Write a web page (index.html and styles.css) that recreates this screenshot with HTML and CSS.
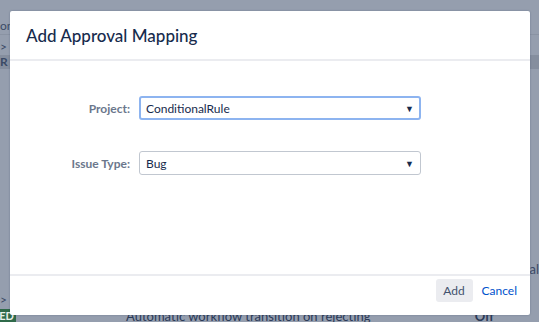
FILE: index.html
```html
<!DOCTYPE html>
<html lang="en">
<head>
<meta charset="UTF-8">
<meta name="viewport" content="width=device-width, initial-scale=1.0">
<title>Add Approval Mapping</title>
<link rel="stylesheet" href="styles.css">
</head>
<body>
  <!-- page behind the dialog, dimmed -->
  <div class="page">
    <div class="page-line top-line"><span class="frag">on</span></div>
    <div class="page-line"><span class="frag">&gt; l</span></div>
    <div class="page-line band"><span class="frag dark">R !</span></div>
    <div class="page-gap"></div>
    <div class="page-line side-text"><span class="frag">al</span></div>
    <div class="page-line arrow-line"><span class="frag">&gt;</span></div>
    <div class="page-line last-row">
      <span class="badge">ED</span>
      <span class="row-text">Automatic workflow transition on rejecting</span>
      <span class="row-state">Off</span>
    </div>
  </div>

  <div class="dialog">
    <div class="dialog-header">
      <h2>Add Approval Mapping</h2>
    </div>
    <div class="dialog-body">
      <div class="field">
        <label>Project:</label>
        <div class="select focused">
          <span>ConditionalRule</span>
          <span class="caret">&#9660;</span>
        </div>
      </div>
      <div class="field">
        <label>Issue Type:</label>
        <div class="select">
          <span>Bug</span>
          <span class="caret">&#9660;</span>
        </div>
      </div>
    </div>
    <div class="dialog-footer">
      <button class="btn">Add</button>
      <a class="cancel" href="#">Cancel</a>
    </div>
  </div>
</body>
</html>
```

FILE: styles.css
```css
body {
  margin: 0;
  font-family: Lato, "Open Sans", sans-serif;
  background-color: #959eae;
  height: 322px;
  overflow: hidden;
}

/* dimmed page behind the dialog */
.page {
  display: flex;
  flex-direction: column;
  color: #3b4a66;
  font-size: 12px;
}

.page-line {
  height: 14px;
  line-height: 14px;
}

.top-line {
  margin-top: 19px;
  border-bottom: 1px solid #8a93a3;
  height: 15px;
}

.page-line:nth-child(2) {
  margin-top: 5px;
}

.band {
  background-color: #858e9e;
  margin-top: 1px;
}

.frag.dark {
  font-weight: bold;
}

.page-gap {
  height: 193px;
}

.side-text {
  text-align: right;
  font-size: 13px;
}

.arrow-line {
  margin-top: 17px;
}

.last-row {
  display: flex;
  align-items: center;
  margin-top: 1px;
  height: 15px;
}

.badge {
  background-color: #2f6a4a;
  color: #e8f0ea;
  font-weight: bold;
  font-size: 11px;
  padding: 0 2px;
  width: 12px;
  overflow: hidden;
  direction: rtl;
}

.row-text {
  margin-left: 110px;
  font-size: 13px;
  color: #2b3a57;
}

.row-state {
  margin-left: auto;
  margin-right: 45px;
  font-weight: bold;
  font-size: 13px;
  color: #2b3a57;
}

/* dialog */
.dialog {
  position: absolute;
  left: 10px;
  top: 11px;
  width: 520px;
  height: 304px;
  background-color: #fff;
  border-radius: 2px;
  box-shadow: 0 0 2px rgba(9, 30, 66, 0.3);
  display: flex;
  flex-direction: column;
}

.dialog-header {
  height: 48px;
  display: flex;
  align-items: center;
  padding-left: 16px;
  border-bottom: 2px solid #ebecf0;
}

.dialog-header h2 {
  margin: 0;
  font-size: 17px;
  font-weight: 500;
  color: #172b4d;
}

.dialog-body {
  flex: 1;
  padding-top: 35px;
  display: flex;
  flex-direction: column;
  gap: 31px;
}

.field {
  display: flex;
  align-items: center;
}

.field label {
  width: 120px;
  text-align: right;
  font-size: 12px;
  font-weight: bold;
  color: #6b778c;
  padding-right: 9px;
}

.select {
  width: 268px;
  height: 22px;
  border: 1px solid #c1c7d0;
  border-radius: 3px;
  display: flex;
  align-items: center;
  justify-content: space-between;
  padding: 0 6px;
  font-size: 12px;
  color: #172b4d;
}

.select.focused {
  border: 2px solid #8db4f0;
  height: 20px;
  padding: 0 5px;
}

.caret {
  font-size: 9px;
  color: #172b4d;
}

.dialog-footer {
  height: 41px;
  border-top: 2px solid #ebecf0;
  display: flex;
  align-items: flex-start;
  justify-content: flex-end;
  padding-top: 3px;
  padding-right: 13px;
  gap: 9px;
  box-sizing: border-box;
}

.btn {
  background-color: #ebecf0;
  border: none;
  border-radius: 3px;
  height: 23px;
  width: 37px;
  padding: 0;
  font-family: inherit;
  font-size: 12px;
  color: #42526e;
}

.cancel {
  color: #0052cc;
  text-decoration: none;
  font-size: 12px;
  line-height: 23px;
}
```
